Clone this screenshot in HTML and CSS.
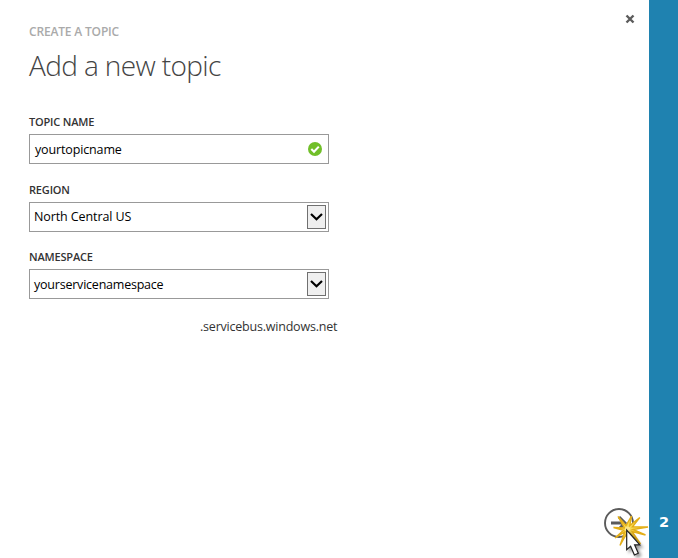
FILE: index.html
```html
<!DOCTYPE html>
<html lang="en">
<head>
<meta charset="utf-8">
<title>Create a topic</title>
<link rel="stylesheet" href="styles.css">
</head>
<body>
<div class="wizard">
  <main class="panel">
    <header class="head">
      <div>
        <p class="eyebrow">CREATE A TOPIC</p>
        <h1 class="title">Add a new topic</h1>
      </div>
      <svg class="close" width="10" height="10" viewBox="0 0 10 10"><path d="M1.5 1.5L8.5 8.5M8.5 1.5L1.5 8.5" fill="none" stroke="#5c5c5c" stroke-width="2.4"/></svg>
    </header>
    <form class="form">
      <div class="field">
        <span class="label">TOPIC NAME</span>
        <div class="box input"><span class="value v-topic">yourtopicname</span>
          <svg class="check" width="14" height="14" viewBox="0 0 14 14"><circle cx="7" cy="7" r="7" fill="#71bf29"/><path d="M3.3 7.1L6 9.8L10.8 4.6" fill="none" stroke="#fff" stroke-width="2.1"/></svg>
        </div>
      </div>
      <div class="field">
        <span class="label">REGION</span>
        <div class="box select region"><span class="value v-region">North Central US</span>
          <span class="drop"><svg width="13" height="8" viewBox="0 0 13 8"><path d="M1 1L6.5 6.2L12 1" fill="none" stroke="#000" stroke-width="2.2"/></svg></span>
        </div>
      </div>
      <div class="field">
        <span class="label">NAMESPACE</span>
        <div class="box select"><span class="value v-namespace">yourservicenamespace</span>
          <span class="drop"><svg width="13" height="8" viewBox="0 0 13 8"><path d="M1 1L6.5 6.2L12 1" fill="none" stroke="#000" stroke-width="2.2"/></svg></span>
        </div>
      </div>
      <p class="suffix"><span>.servicebus.windows.net</span></p>
    </form>
  </main>
  <aside class="steps"><span>2</span></aside>
  <svg class="next" width="54" height="58" viewBox="600 500 54 58">
    <defs><filter id="shadow" x="-40%" y="-30%" width="200%" height="180%"><feDropShadow dx="2.5" dy="2.5" stdDeviation="1.5" flood-color="#000" flood-opacity=".4"/></filter></defs>
    <circle cx="619" cy="523" r="14" fill="#fff" stroke="#5b5b5b" stroke-width="1.9"/>
    <path d="M611 523H624M619 517L625 523L619 529" fill="none" stroke="#5b5b5b" stroke-width="3"/>
    <path d="M618 516.5L626 525.5L631.5 516L629.8 525.5L639.8 517.5L632.5 526.8L648 527L633 529.5L645.5 535L632 531.5L640.5 544L630 533L629 546L627 533L620 545.5L624.8 532L615 538L623.5 530.3L613.5 527.5L624.5 528Z" fill="#f8da52" stroke="#e3ae18" stroke-width="1.4"/>
    <circle cx="627.5" cy="529" r="2.6" fill="#fbe58a"/>
    <path filter="url(#shadow)" d="M626.7 530V549.6L630.6 546.2L634.4 555L638.3 553.3L634.6 544.8H639.8Z" fill="#fff" stroke="#222" stroke-width="1.2"/>
  </svg>
</div>
</body>
</html>
```
FILE: styles.css
```css
* { box-sizing: border-box; }
body { margin: 0; font-family: "Open Sans", "Noto Sans", sans-serif; background: #fff; }
p, h1 { margin: 0; }
.wizard { position: relative; display: flex; width: 678px; height: 558px; overflow: hidden; }
.panel { flex: 1; padding: 14px 14px 0 29px; }
.head { display: flex; justify-content: space-between; height: 100px; }
.eyebrow { margin-top: 10px; font-size: 12px; line-height: 16px; font-weight: 600; letter-spacing: -0.17px; color: #aaa; }
.title { margin-top: 6px; font-size: 28px; line-height: 38px; font-weight: 300; letter-spacing: -0.62px; color: #444; white-space: nowrap; }
.close { flex: none; }
.form { width: 300px; }
.field { height: 67.5px; }
.label { display: block; height: 20px; font-size: 11px; line-height: 16px; font-weight: 600; letter-spacing: -0.17px; color: #333; }
.box { display: flex; align-items: center; justify-content: space-between; width: 300px; height: 30px; border: 1px solid #999; font-size: 12.5px; line-height: 18px; color: #000; }
.input { padding: 0 6px 0 5px; }
.select { padding: 0 2px 0 4px; }
.value { white-space: nowrap; padding-top: 2px; }
.region .value { padding-top: 0; }
.v-topic { letter-spacing: -0.14px; }
.v-region { letter-spacing: -0.1px; }
.v-namespace { letter-spacing: -0.22px; }
.drop { display: flex; align-items: center; justify-content: center; width: 19px; height: 24px; border: 1px solid #707070; background: #efefef; }
.suffix { display: flex; margin: 1px 0 0 171px; font-size: 12.5px; line-height: 18px; letter-spacing: -0.21px; color: #333; }
.steps { display: flex; align-items: flex-end; justify-content: center; width: 29px; padding: 0 0 26px 1px; background: #1f82b0; color: #fff; font-family: "DejaVu Sans", sans-serif; font-size: 14.5px; line-height: 20px; font-weight: 700; }
.next { position: absolute; left: 600px; top: 500px; }
```
